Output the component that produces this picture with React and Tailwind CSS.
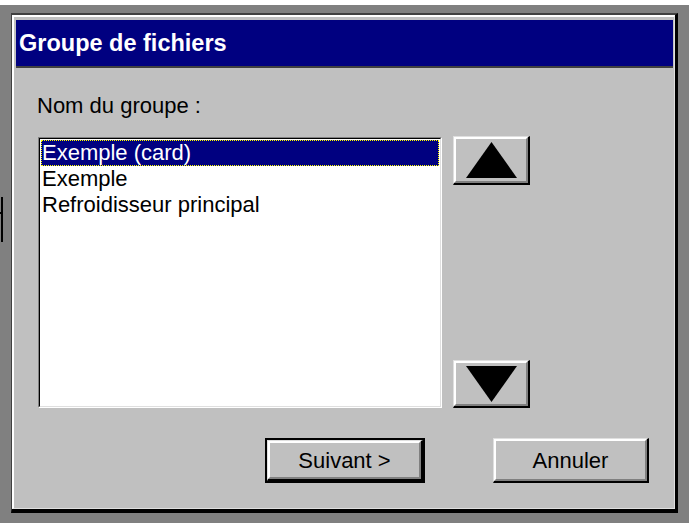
function Raised({ className, children }) {
    return (
        <div className={"flex border-t border-l border-t-[#dfdfdf] border-l-[#dfdfdf] border-r-2 border-b-2 border-r-black border-b-black " + className}>
            <div className="flex-1 flex items-center justify-center bg-[#c0c0c0] border-t-2 border-l-2 border-t-white border-l-white border-r-2 border-b-2 border-r-[#808080] border-b-[#808080]">
                {children}
            </div>
        </div>
    )
}

function Arrow({ down }) {
    return (
        <svg width="51" height="36" viewBox="0 0 51 36">
            {down
                ? <polygon points="0,0 51,0 25.5,36" fill="#000"/>
                : <polygon points="25.5,0 51,36 0,36" fill="#000"/>}
        </svg>
    )
}

const groups = ['Exemple (card)', 'Exemple', 'Refroidisseur principal']

export default function App() {
    return (
        <div className="w-[689px] h-[523px] bg-[#808080] flex flex-col text-black font-['Liberation_Sans',Arial,sans-serif] text-[22px] leading-[25px]">
            <div className="h-[5px] bg-white shrink-0"/>
            <div className="flex flex-1 pt-[8px] pb-[10px] pr-[11px]">
                {/* stray mark on the left gutter */}
                <div className="w-[11px] shrink-0 flex items-start pt-[184px]">
                    <div className="w-[1px] h-[2px] bg-black mt-[15px]"/>
                    <div className="w-[2px] h-[45px] bg-black"/>
                </div>
                <div className="flex-1 flex border-t-2 border-l border-t-[#404040] border-l-[#404040] border-r-[3px] border-b-4 border-r-black border-b-black">
                    <div className="flex-1 flex flex-col bg-[#c0c0c0] pt-[3px] pl-[2px] pr-[1px] border-t-2 border-l-2 border-t-white border-l-white border-r border-b border-r-[#dfdfdf] border-b-[#dfdfdf]">
                        <div className="h-[48px] shrink-0 bg-[#000080] border-b-2 border-b-[#404040] flex items-center pl-[3px] text-white font-bold text-[23.5px]">
                            Groupe de fichiers
                        </div>
                        <div className="flex-1 flex flex-col pl-[22px] pr-[24px] pt-[25px]">
                            <div className="-ml-px">Nom du groupe :</div>
                            <div className="mt-[19px] flex h-[271px]">
                                <div className="w-[404px] flex border-t border-l border-t-[#808080] border-l-[#808080] border-r border-b border-r-white border-b-white">
                                    <div className="flex-1 bg-white p-[1px] border-t border-l border-t-black border-l-black border-r border-b border-r-[#dfdfdf] border-b-[#dfdfdf]">
                                        {groups.map((g, i) =>
                                            <div key={g} className={i === 0
                                                ? "h-[26px] leading-[24px] bg-[#000080] text-white border border-dotted border-[#ffff00] whitespace-nowrap"
                                                : "h-[26px] leading-[26px] pl-[1px] whitespace-nowrap"}>
                                                {g}
                                            </div>)}
                                    </div>
                                </div>
                                <div className="ml-[11px] -mt-px w-[77px] flex flex-col justify-between">
                                    <Raised className="h-[49px]"><Arrow/></Raised>
                                    <Raised className="h-[48px]"><Arrow down/></Raised>
                                </div>
                            </div>
                            <div className="mt-[30px] flex justify-end gap-[68px]">
                                <div className="w-[160px] h-[45px] flex border-2 border-black">
                                    <Raised className="flex-1">Suivant &gt;</Raised>
                                </div>
                                <Raised className="w-[156px] h-[45px]">Annuler</Raised>
                            </div>
                        </div>
                    </div>
                </div>
            </div>
        </div>
    )
}
